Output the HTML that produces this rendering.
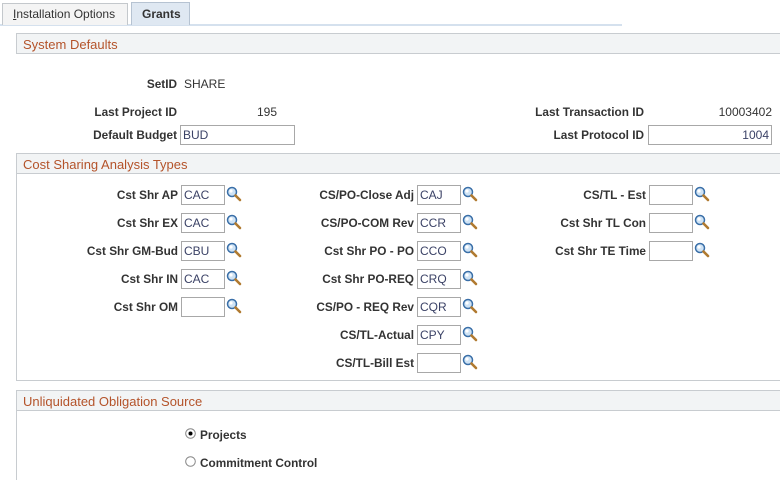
<!DOCTYPE html>
<html><head><meta charset="utf-8"><style>
*{margin:0;padding:0;box-sizing:border-box}
html,body{width:780px;height:480px;overflow:hidden}
body{background:#fff;font-family:"Liberation Sans",Arial,sans-serif;font-size:12px;color:#333;position:relative}
.a{position:absolute;white-space:nowrap}
.lbl{position:absolute;font-weight:bold;color:#333;text-align:right;white-space:nowrap;line-height:14px;font-size:11.8px}
.val{position:absolute;color:#333;white-space:nowrap;line-height:14px}
.inp{position:absolute;height:20px;border:1px solid #a8a8a8;background:#fff;color:#3b4266;padding:2px 2px;line-height:14px;font-size:12px}
.box{position:absolute;left:16px;right:0;border:1px solid #c8ccd0;border-right:none}
.hdr{position:absolute;left:16px;right:0;height:21px;background:#f2f4f5;border:1px solid #c8ccd0;border-right:none;color:#b4532a;font-size:13px;padding:3px 0 0 6px}
.mg{position:absolute;width:16px;height:16px}
</style></head><body>
<div class="a" style="left:0;top:24px;width:622px;height:2px;background:#d5e1ee"></div>
<div class="a" style="left:2px;top:3px;width:126px;height:22px;border:1px solid #c4c8cc;border-bottom:none;background:#f4f4f4;color:#333;font-size:12px;padding:3px 0 0 10px"><u>I</u>nstallation Options</div>
<div class="a" style="left:131px;top:2px;width:59px;height:23px;border:1px solid #b6c3d2;border-bottom:none;background:#dfe8f2;color:#333;font-weight:bold;font-size:12px;padding:4px 0 0 10px">Grants</div>

<div class="hdr" style="top:33px">System Defaults</div>
<div class="lbl" style="right:603px;top:77px">SetID</div>
<div class="val" style="left:184px;top:77px">SHARE</div>
<div class="lbl" style="right:603px;top:105px">Last Project ID</div>
<div class="val" style="left:257px;top:105px">195</div>
<div class="lbl" style="right:603px;top:128px">Default Budget</div>
<div class="inp" style="left:180px;top:125px;width:115px">BUD</div>
<div class="lbl" style="right:136px;top:105px">Last Transaction ID</div>
<div class="val" style="right:8px;top:105px">10003402</div>
<div class="lbl" style="right:136px;top:128px">Last Protocol ID</div>
<div class="inp" style="left:648px;top:125px;width:124px;text-align:right">1004</div>

<div class="box" style="top:153px;height:228px"></div>
<div class="hdr" style="top:153px">Cost Sharing Analysis Types</div>

<svg width="0" height="0" style="position:absolute"><defs>
<g id="m"><circle cx="6" cy="6" r="4.5" fill="#cfe3f5" stroke="#3a6fa8" stroke-width="1.5"/><circle cx="5" cy="5" r="1.6" fill="#fff"/><path d="M9.5 9.5 L14 14" stroke="#b07a30" stroke-width="2.6" stroke-linecap="round"/></g>
</defs></svg>

<div class="lbl" style="right:602px;top:188px">Cst Shr AP</div><div class="inp" style="left:181px;top:185px;width:44px">CAC</div><svg class="mg" style="left:226px;top:186px"><use href="#m"/></svg>
<div class="lbl" style="right:602px;top:216px">Cst Shr EX</div><div class="inp" style="left:181px;top:213px;width:44px">CAC</div><svg class="mg" style="left:226px;top:214px"><use href="#m"/></svg>
<div class="lbl" style="right:602px;top:244px">Cst Shr GM-Bud</div><div class="inp" style="left:181px;top:241px;width:44px">CBU</div><svg class="mg" style="left:226px;top:242px"><use href="#m"/></svg>
<div class="lbl" style="right:602px;top:272px">Cst Shr IN</div><div class="inp" style="left:181px;top:269px;width:44px">CAC</div><svg class="mg" style="left:226px;top:270px"><use href="#m"/></svg>
<div class="lbl" style="right:602px;top:300px">Cst Shr OM</div><div class="inp" style="left:181px;top:297px;width:44px"></div><svg class="mg" style="left:226px;top:298px"><use href="#m"/></svg>

<div class="lbl" style="right:366px;top:188px">CS/PO-Close Adj</div><div class="inp" style="left:417px;top:185px;width:44px">CAJ</div><svg class="mg" style="left:462px;top:186px"><use href="#m"/></svg>
<div class="lbl" style="right:366px;top:216px">CS/PO-COM Rev</div><div class="inp" style="left:417px;top:213px;width:44px">CCR</div><svg class="mg" style="left:462px;top:214px"><use href="#m"/></svg>
<div class="lbl" style="right:366px;top:244px">Cst Shr PO - PO</div><div class="inp" style="left:417px;top:241px;width:44px">CCO</div><svg class="mg" style="left:462px;top:242px"><use href="#m"/></svg>
<div class="lbl" style="right:366px;top:272px">Cst Shr PO-REQ</div><div class="inp" style="left:417px;top:269px;width:44px">CRQ</div><svg class="mg" style="left:462px;top:270px"><use href="#m"/></svg>
<div class="lbl" style="right:366px;top:300px">CS/PO - REQ Rev</div><div class="inp" style="left:417px;top:297px;width:44px">CQR</div><svg class="mg" style="left:462px;top:298px"><use href="#m"/></svg>
<div class="lbl" style="right:366px;top:328px">CS/TL-Actual</div><div class="inp" style="left:417px;top:325px;width:44px">CPY</div><svg class="mg" style="left:462px;top:326px"><use href="#m"/></svg>
<div class="lbl" style="right:366px;top:356px">CS/TL-Bill Est</div><div class="inp" style="left:417px;top:353px;width:44px"></div><svg class="mg" style="left:462px;top:354px"><use href="#m"/></svg>

<div class="lbl" style="right:134px;top:188px">CS/TL - Est</div><div class="inp" style="left:649px;top:185px;width:44px"></div><svg class="mg" style="left:694px;top:186px"><use href="#m"/></svg>
<div class="lbl" style="right:134px;top:216px">Cst Shr TL Con</div><div class="inp" style="left:649px;top:213px;width:44px"></div><svg class="mg" style="left:694px;top:214px"><use href="#m"/></svg>
<div class="lbl" style="right:134px;top:244px">Cst Shr TE Time</div><div class="inp" style="left:649px;top:241px;width:44px"></div><svg class="mg" style="left:694px;top:242px"><use href="#m"/></svg>

<div class="box" style="top:390px;height:100px"></div>
<div class="hdr" style="top:390px">Unliquidated Obligation Source</div>
<svg class="a" style="left:185px;top:428px" width="11" height="11"><circle cx="5.5" cy="5.5" r="4.8" fill="#fff" stroke="#888" stroke-width="1"/><circle cx="5.5" cy="5.5" r="2" fill="#000"/></svg>
<div class="lbl" style="left:200px;top:428px;text-align:left">Projects</div>
<svg class="a" style="left:185px;top:456px" width="11" height="11"><circle cx="5.5" cy="5.5" r="4.8" fill="#fff" stroke="#888" stroke-width="1"/></svg>
<div class="lbl" style="left:200px;top:456px;text-align:left">Commitment Control</div>
</body></html>
